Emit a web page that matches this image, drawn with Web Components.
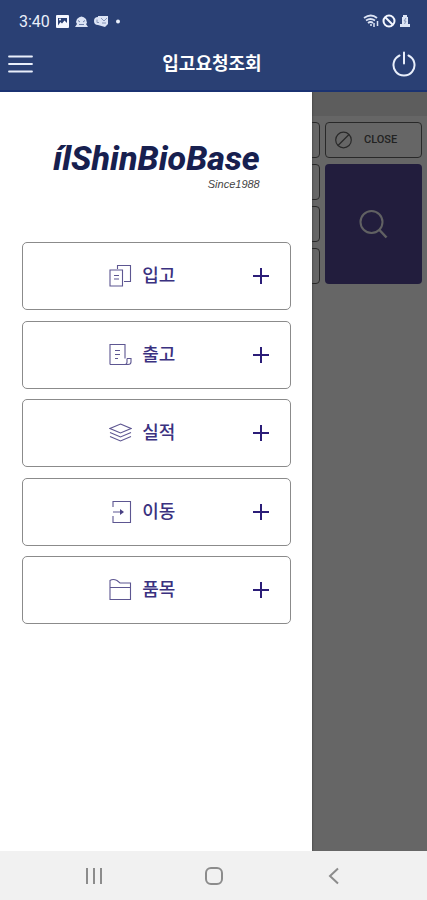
<!DOCTYPE html>
<html lang="ko">
<head>
<meta charset="utf-8">
<meta name="viewport" content="width=device-width, initial-scale=1">
<title>입고요청조회</title>
<style>
html, body { margin: 0; height: 100%; }
body { font-family: Roboto, "Noto Sans CJK KR", sans-serif; }
</style>
</head>
<body>
<stock-app></stock-app>
<script>
const define = (name, html, setup) => {
  const template = document.createElement('template');
  template.innerHTML = html;
  customElements.define(name, class extends HTMLElement {
    constructor() {
      super();
      this.attachShadow({ mode: 'open' }).append(template.content.cloneNode(true));
    }
    connectedCallback() { if (setup) setup(this, this.shadowRoot); }
  });
};

define('status-bar', `
<style>
:host { display: flex; align-items: center; justify-content: space-between; height: 42px; padding: 0 16px 0 19px; color: #e9effb; font-size: 16px; }
div { display: flex; align-items: center; gap: 6px; }
.right { gap: 3px; }
svg { display: block; }
</style>
<div>
  <span>3:40</span>
  <svg width="13" height="13" viewBox="0 0 13 13"><rect width="13" height="13" rx="1" fill="#f4f7ff"/><path d="M2 10.500V3h9v5L8.500 5.500 6 8.500 4.500 7z" fill="#2a4074"/><circle cx="4" cy="4.500" r="1" fill="#f4f7ff"/></svg>
  <svg width="13" height="13" viewBox="0 0 13 13" fill="#dce4f5"><path d="M2 4q4.500-5 9 0l1 4-1 1 2 3H0l2-3-1-2z"/><path d="M3 5.500l2 1.500M8 7l2-1.500M4 9.500h5" stroke="#6d7fa8"/></svg>
  <svg width="15" height="13" viewBox="0 0 15 13" fill="#dce4f5"><path d="M4 1h10v8l-3 3-7-2z"/><circle cx="4" cy="6" r="4"/><path d="M3 4.500v3h2M7 3l3 3 3-3M8 8h4" fill="none" stroke="#8796b8"/></svg>
  <svg width="15" height="13" viewBox="0 0 15 13"><circle cx="3" cy="6.500" r="2" fill="#e9effb"/></svg>
</div>
<div class="right">
  <svg width="16" height="14" viewBox="0 0 16 14" fill="none" stroke="#dce4f5" stroke-width="1.800"><path d="M1 4q7-5 13 0M3 6.500q4.500-3 9 0M5 9q2.500-2 5 0"/><path d="M8 10v2M11 9v4M14.500 7v5" stroke-width="1.500"/></svg>
  <svg width="14" height="14" viewBox="0 0 14 14" fill="none" stroke="#f4f7ff" stroke-width="2"><circle cx="7" cy="7" r="5.500"/><path d="M3 3l8 8"/></svg>
  <svg width="12" height="14" viewBox="0 0 12 14" fill="#dce4f5"><path d="M4 1h4v2h1v7h2v3H1v-3h2V3h1z"/><path d="M7 4L5 7h2L5.500 10" fill="none" stroke="#8796b8"/></svg>
</div>`);

define('app-bar', `
<style>
:host { display: grid; grid-template-columns: 1fr auto 1fr; align-items: center; box-sizing: border-box; height: 50px; padding: 0 11px 4px 8px; border-bottom: 2px solid #1b3372; color: #fff; }
h1 { margin: 0; font: 700 18px/24px Roboto, "Noto Sans CJK KR", sans-serif; }
button { padding: 0; border: 0; background: none; color: inherit; cursor: pointer; }
button:last-child { justify-self: end; }
button:first-child { justify-self: start; }
svg { display: block; fill: none; stroke: #e9effb; stroke-width: 2; stroke-linecap: round; }
</style>
<button aria-label="메뉴"><svg width="25" height="24" viewBox="0 0 25 24"><path d="M1 4.500h23M1 12h23M1 19.500h23" stroke-width="1.800"/></svg></button>
<h1><slot></slot></h1>
<button aria-label="로그아웃"><svg width="24" height="26" viewBox="0 0 24 26"><path d="M12 1.500v11M7.500 4.500a10.500 10.500 0 1 0 9 0"/></svg></button>`);

define('search-panel', `
<style>
:host { display: block; background: #fff; }
.strip { height: 24px; background: #e9e9e9; }
form { display: grid; grid-template-columns: minmax(0, 1fr) 97px; grid-template-rows: repeat(4, 36px); gap: 6px 5px; padding: 6px 5px; }
input { grid-column: 1; min-width: 0; box-sizing: border-box; border: 1px solid #666; border-radius: 4px; background: #fff; }
button { grid-column: 2; display: flex; align-items: center; box-sizing: border-box; border-radius: 4px; cursor: pointer; font: 500 11px/16px Roboto, sans-serif; }
.close { grid-row: 1; gap: 12px; padding: 0 9px; border: 1px solid #666; background: #fff; color: #555; }
.find { grid-row: 2 / 5; justify-content: center; border: 0; background: #554a99; }
svg { display: block; fill: none; }
</style>
<div class="strip"></div>
<form>
  <input aria-label="조회 조건 1"><button class="close" type="button"><svg width="17" height="18" viewBox="0 0 17 18" stroke="#666" stroke-width="1.200"><circle cx="8.500" cy="9" r="7.800"/><path d="M3 14.500L14 3.500"/></svg>CLOSE</button>
  <input aria-label="조회 조건 2"><button class="find" type="button" aria-label="조회"><svg width="30" height="30" viewBox="0 0 30 30" stroke="#f2f2f6" stroke-width="2"><circle cx="13.500" cy="13" r="11"/><path d="M21 20.500l7.500 8" stroke-width="2.500"/></svg></button>
  <input aria-label="조회 조건 3">
  <input aria-label="조회 조건 4">
</form>`);

define('brand-logo', `
<style>
:host { display: flex; flex-direction: column; align-items: flex-end; width: max-content; margin: 0 auto; color: #17204f; font-style: italic; }
strong { font: italic 800 34px/40px Roboto, sans-serif; }
small { font: italic 400 11px/12px "Liberation Sans", sans-serif; color: #444; }
</style>
<strong>ílShinBioBase</strong><small>Since1988</small>`);

const icons = {
  copy: '<path d="M8.500 5V1.500h13v16H15"/><path d="M1 6h12.500v16H1zM5 11.500h5M5 15h5"/>',
  receipt: '<path d="M1 21.500V1.500h15v14M1 21.500h18q3 0 3-2.500v-3.500h-4M18 15.500V19q0 2.500-2 2.500M6 7.500h5M6 11.500h5M6 15.500h3"/>',
  layers: '<path d="M11.500 3L22 7.500 11.500 12 1 7.500zM1 11.500L11.500 16 22 11.500M1 15.500L11.500 20 22 15.500"/>',
  enter: '<path d="M4 7V1.500h17.500v21H4V16M4 12h9"/><path d="M11 9l4 3-4 3z" fill="#494184" stroke="none"/>',
  folder: '<path d="M1 21.500V2.500Q4 .5 8 2.500l3 2.500h10.500v16.500zM1 9.500h20.500"/>'
};
define('menu-item', `
<style>
:host { display: block; }
button { display: grid; grid-template-columns: 1fr auto 1fr; align-items: center; box-sizing: border-box; width: 100%; height: 68px; padding: 0 21px; border: 1px solid #8b8b8b; border-radius: 5px; background: #fff; color: #3a3180; font: 500 18px/26px Roboto, "Noto Sans CJK KR", sans-serif; cursor: pointer; }
.label { grid-column: 2; display: flex; align-items: center; gap: 10px; margin-right: 28px; }
svg { display: block; fill: none; }
.icon { stroke: #5d5691; stroke-width: 1.100; }
.plus { justify-self: end; stroke: #2b1d78; stroke-width: 2; }
</style>
<button type="button" aria-expanded="false">
  <span class="label"><svg class="icon" width="23" height="24" viewBox="0 0 23 24" aria-hidden="true"></svg><slot></slot></span>
  <svg class="plus" width="16" height="16" viewBox="0 0 16 16" aria-hidden="true"><path d="M8 0v16M0 8h16"/></svg>
</button>`, (host, root) => {
  root.querySelector('.icon').innerHTML = icons[host.getAttribute('icon')];
});

define('nav-drawer', `
<style>
:host { display: block; box-sizing: border-box; background: #fff; padding: 46px 21px 20px 22px; box-shadow: 0 0 2px #333; }
nav { display: flex; flex-direction: column; justify-content: space-between; min-height: 382px; margin-top: 52px; }
</style>
<brand-logo></brand-logo>
<nav aria-label="주 메뉴">
  <menu-item icon="copy">입고</menu-item>
  <menu-item icon="receipt">출고</menu-item>
  <menu-item icon="layers">실적</menu-item>
  <menu-item icon="enter">이동</menu-item>
  <menu-item icon="folder">품목</menu-item>
</nav>`);

define('system-nav', `
<style>
:host { display: grid; grid-template-columns: repeat(3, 120px); justify-content: center; align-items: center; height: 49px; background: #f1f1f1; }
button { display: flex; justify-content: center; padding: 0; border: 0; background: none; cursor: pointer; }
svg { display: block; fill: none; stroke: #8c8c8c; stroke-width: 2; }
</style>
<button aria-label="최근 앱"><svg width="18" height="18" viewBox="0 0 18 18"><path d="M2 1v16M9 1v16M16 1v16"/></svg></button>
<button aria-label="홈"><svg width="18" height="18" viewBox="0 0 18 18"><rect x="1" y="1" width="16" height="16" rx="5"/></svg></button>
<button aria-label="뒤로"><svg width="18" height="18" viewBox="0 0 18 18"><path d="M13 1.500L5 9l8 7.500"/></svg></button>`);

define('stock-app', `
<style>
:host { display: flex; flex-direction: column; min-height: 100vh; }
header { background: #2a4074; }
main { flex: 1; display: grid; grid-template-columns: 73% 27%; overflow: hidden; }
search-panel, .scrim { grid-area: 1 / 1 / 2 / 3; }
.scrim { background: rgba(0, 0, 0, .6); z-index: 1; }
nav-drawer { grid-area: 1 / 1; z-index: 2; }
</style>
<header><status-bar></status-bar><app-bar>입고요청조회</app-bar></header>
<main>
  <search-panel></search-panel>
  <div class="scrim"></div>
  <nav-drawer></nav-drawer>
</main>
<system-nav></system-nav>`);
</script>
</body>
</html>
